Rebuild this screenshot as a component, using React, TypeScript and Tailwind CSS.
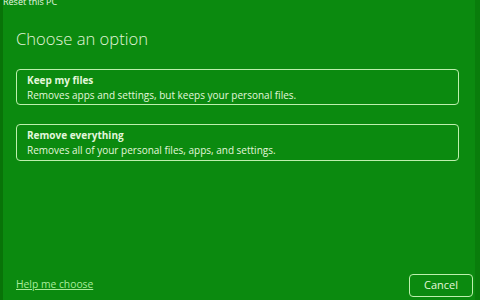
export default function App() {
  return (
    <div
      className="w-[480px] h-[300px] bg-[#0b8a0f] flex overflow-hidden text-[#e3f7dc]"
      style={{ fontFamily: '"Open Sans", "Noto Sans", sans-serif' }}
    >
      <div className="w-[3px] bg-[#087308]" />
      <div className="flex-1 flex flex-col pl-[13px] pr-[2px] relative">
        <div className="absolute left-[0px] top-[-3px] text-[9px] text-[#e9f7e4] leading-[10px]">
          Reset this PC
        </div>
        <h1 className="mt-[27px] text-[16.6px] font-light leading-[24px] text-[#e0f5d8]">
          Choose an option
        </h1>
        <div className="mt-[18px] flex flex-col gap-[19px] pr-[14px]">
          <button className="text-left border-[1.5px] border-[#bdf0ad] rounded-[4px] h-[36px] px-[10px] pt-[3px] flex flex-col">
            <span className="text-[10px] font-bold leading-[15px]">Keep my files</span>
            <span className="text-[10px] leading-[14px]">
              Removes apps and settings, but keeps your personal files.
            </span>
          </button>
          <button className="text-left border-[1.5px] border-[#bdf0ad] rounded-[4px] h-[37px] px-[10px] pt-[3px] flex flex-col">
            <span className="text-[10px] font-bold leading-[15px]">Remove everything</span>
            <span className="text-[10px] leading-[14px]">
              Removes all of your personal files, apps, and settings.
            </span>
          </button>
        </div>
        <div className="mt-auto mb-[3px] flex items-end justify-between">
          <a className="text-[10.3px] underline text-[#a9ec9c] mb-[5px]">Help me choose</a>
          <button className="w-[64px] h-[23px] border-[1.5px] border-[#bdf0ad] rounded-[4px] text-[11px] text-[#e3f7dc]">
            Cancel
          </button>
        </div>
      </div>
      <div className="w-[5px] bg-[#097d0b]" />
    </div>
  );
}
